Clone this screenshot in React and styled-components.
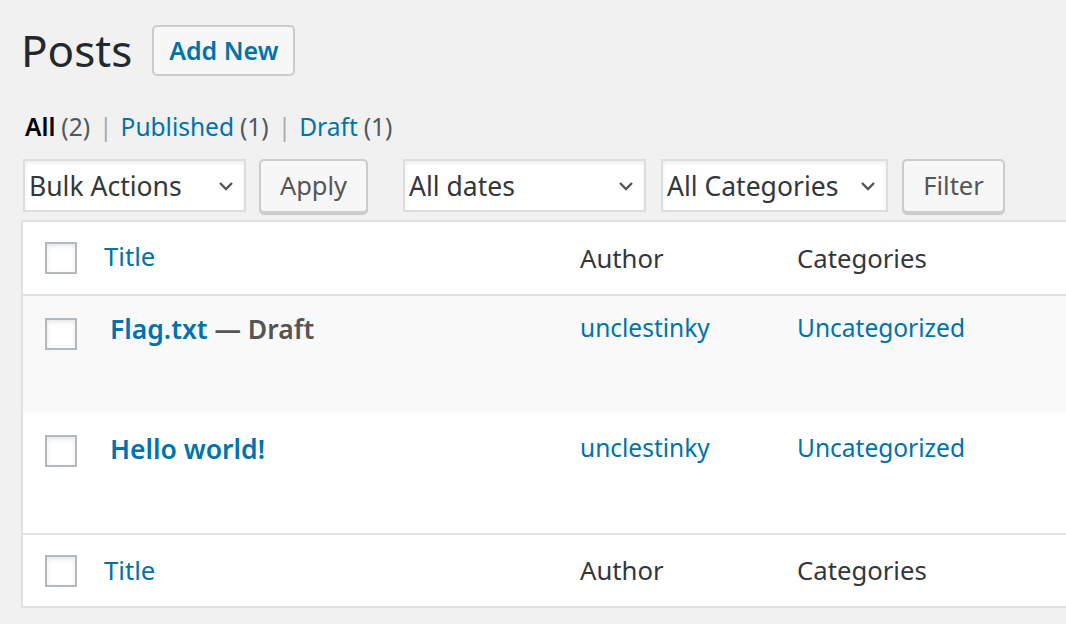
import React from "react";
import styled, { createGlobalStyle } from "styled-components";

const Global = createGlobalStyle`
  html, body {
    margin: 0;
    padding: 0;
    background: #f1f1f1;
    overflow: hidden;
  }
  body {
    font-family: "Noto Sans", "Open Sans", sans-serif;
    color: #23282d;
  }
`;

const Wrap = styled.div`
  width: 1120px;
  padding: 24px 0 0 21px;
`;

const TitleRow = styled.div`
  display: flex;
  align-items: center;
  height: 52px;
`;

const PageTitle = styled.h1`
  margin: 0;
  font-size: 44px;
  font-weight: 400;
  color: #23282d;
  line-height: 1;
`;

const AddNew = styled.a`
  display: flex;
  align-items: center;
  justify-content: center;
  box-sizing: border-box;
  margin-left: 20px;
  width: 143px;
  height: 51px;
  border: 2px solid #ccc;
  border-radius: 5px;
  background: #f7f7f7;
  color: #0073aa;
  font-size: 25px;
  font-weight: 600;
  text-decoration: none;
`;

const Views = styled.ul`
  display: flex;
  align-items: center;
  list-style: none;
  margin: 35px 0 0 4px;
  padding: 0;
  font-size: 24.5px;
  color: #646970;
  height: 30px;
`;

const ViewItem = styled.li`
  display: flex;
  align-items: center;
`;

const ViewLink = styled.a`
  color: ${(p) => (p.$current ? "#000" : "#0073aa")};
  font-weight: ${(p) => (p.$current ? 600 : 400)};
  text-decoration: none;
  margin-right: 6px;
`;

const Count = styled.span`
  color: #50575e;
`;

const Sep = styled.span`
  color: #a7aaad;
  margin: 0 8px 0 9px;
`;

const TableNav = styled.div`
  display: flex;
  align-items: flex-start;
  margin: 18px 0 0 2px;
  height: 61px;
`;

const Select = styled.div`
  position: relative;
  box-sizing: border-box;
  width: ${(p) => p.$w}px;
  height: 53px;
  margin-right: ${(p) => p.$gap}px;
  border: 2px solid #ddd;
  background: #fff;
  box-shadow: inset 0 2px 4px rgba(0, 0, 0, 0.07);
  display: flex;
  align-items: center;
  padding-left: 4px;
  font-size: 26.5px;
  color: #32373c;
`;

const Chevron = styled.svg`
  position: absolute;
  right: 10px;
  top: 50%;
  margin-top: -5px;
  width: 16px;
  height: 10px;
`;

const Button = styled.button`
  box-sizing: border-box;
  width: ${(p) => p.$w}px;
  height: 54px;
  margin-right: ${(p) => p.$gap || 0}px;
  border: 2px solid #ccc;
  border-radius: 5px;
  background: #f7f7f7;
  box-shadow: 0 2px 0 #ccc;
  font-family: inherit;
  font-size: 25.5px;
  color: #555;
  padding: 0 0 2px;
`;

const Table = styled.table`
  width: 100%;
  border-collapse: collapse;
  background: #fff;
  border: 2px solid #e1e1e1;
  box-shadow: 0 2px 2px rgba(0, 0, 0, 0.04);
  table-layout: fixed;
`;

const Row = styled.tr`
  background: ${(p) => (p.$striped ? "#f9f9f9" : "#fff")};
  height: ${(p) => p.$h}px;
`;

const HeadRow = styled.tr`
  height: ${(p) => p.$h}px;
  border-${(p) => p.$side}: 2px solid #e1e1e1;
`;

const CheckCell = styled.td`
  width: 62px;
  padding: ${(p) => (p.$body ? "22px 0 0 22px" : "0 0 0 22px")};
  vertical-align: ${(p) => (p.$body ? "top" : "middle")};
  box-sizing: border-box;
`;

const Box = styled.span`
  display: block;
  box-sizing: border-box;
  width: 32px;
  height: 32px;
  border: 2px solid #b4b9be;
  background: #fff;
  box-shadow: inset 0 2px 4px rgba(0, 0, 0, 0.1);
`;

const Th = styled.th`
  width: ${(p) => (p.$w ? p.$w + "px" : "auto")};
  text-align: left;
  font-weight: 400;
  font-size: 25.7px;
  padding: 0 20px ${(p) => p.$pb || 0}px;
  color: ${(p) => (p.$link ? "#0073aa" : "#32373c")};
  box-sizing: border-box;
`;

const Td = styled.td`
  vertical-align: top;
  padding: ${(p) => p.$pt}px 20px 0 ${(p) => p.$pl || 20}px;
  font-size: 24.5px;
`;

const RowTitle = styled.a`
  color: #0073aa;
  font-weight: 600;
  font-size: 26.5px;
  text-decoration: none;
`;

const State = styled.span`
  color: #555;
  font-weight: 600;
  font-size: 26.5px;
`;

const CellLink = styled.a`
  color: #0073aa;
  text-decoration: none;
`;

const ChevronIcon = () => (
  <Chevron viewBox="0 0 16 10">
    <path d="M2 2 L8 8 L14 2" fill="none" stroke="#555" strokeWidth="2.4" />
  </Chevron>
);

const posts = [
  { title: "Flag.txt", state: "Draft" },
  { title: "Hello world!" },
];

export default function App() {
  return (
    <>
      <Global />
      <Wrap>
        <TitleRow>
          <PageTitle>Posts</PageTitle>
          <AddNew>Add New</AddNew>
        </TitleRow>
        <Views>
          <ViewItem>
            <ViewLink $current>All</ViewLink>
            <Count>(2)</Count>
            <Sep>|</Sep>
          </ViewItem>
          <ViewItem>
            <ViewLink>Published</ViewLink>
            <Count>(1)</Count>
            <Sep>|</Sep>
          </ViewItem>
          <ViewItem>
            <ViewLink>Draft</ViewLink>
            <Count>(1)</Count>
          </ViewItem>
        </Views>
        <TableNav>
          <Select $w={223} $gap={13}>
            Bulk Actions
            <ChevronIcon />
          </Select>
          <Button $w={109} $gap={35}>Apply</Button>
          <Select $w={243} $gap={15}>
            All dates
            <ChevronIcon />
          </Select>
          <Select $w={227} $gap={14}>
            All Categories
            <ChevronIcon />
          </Select>
          <Button $w={103}>Filter</Button>
        </TableNav>
        <Table>
          <thead>
            <HeadRow $h={74} $side="bottom">
              <CheckCell as="td">
                <Box />
              </CheckCell>
              <Th $w={476} $link $pb={3}>Title</Th>
              <Th $w={217}>Author</Th>
              <Th>Categories</Th>
            </HeadRow>
          </thead>
          <tbody>
            {posts.map((p, i) => (
              <Row key={p.title} $striped={i % 2 === 0} $h={i === 0 ? 118 : 121}>
                <CheckCell $body>
                  <Box />
                </CheckCell>
                <Td $pl={26} $pt={i === 0 ? 15 : 18}>
                  <RowTitle>{p.title}</RowTitle>
                  {p.state && <State> — {p.state}</State>}
                </Td>
                <Td $pt={i === 0 ? 15 : 18}>
                  <CellLink>unclestinky</CellLink>
                </Td>
                <Td $pt={i === 0 ? 15 : 18}>
                  <CellLink>Uncategorized</CellLink>
                </Td>
              </Row>
            ))}
          </tbody>
          <tfoot>
            <HeadRow $h={73} $side="top">
              <CheckCell as="td">
                <Box />
              </CheckCell>
              <Th $link>Title</Th>
              <Th>Author</Th>
              <Th>Categories</Th>
            </HeadRow>
          </tfoot>
        </Table>
      </Wrap>
    </>
  );
}
